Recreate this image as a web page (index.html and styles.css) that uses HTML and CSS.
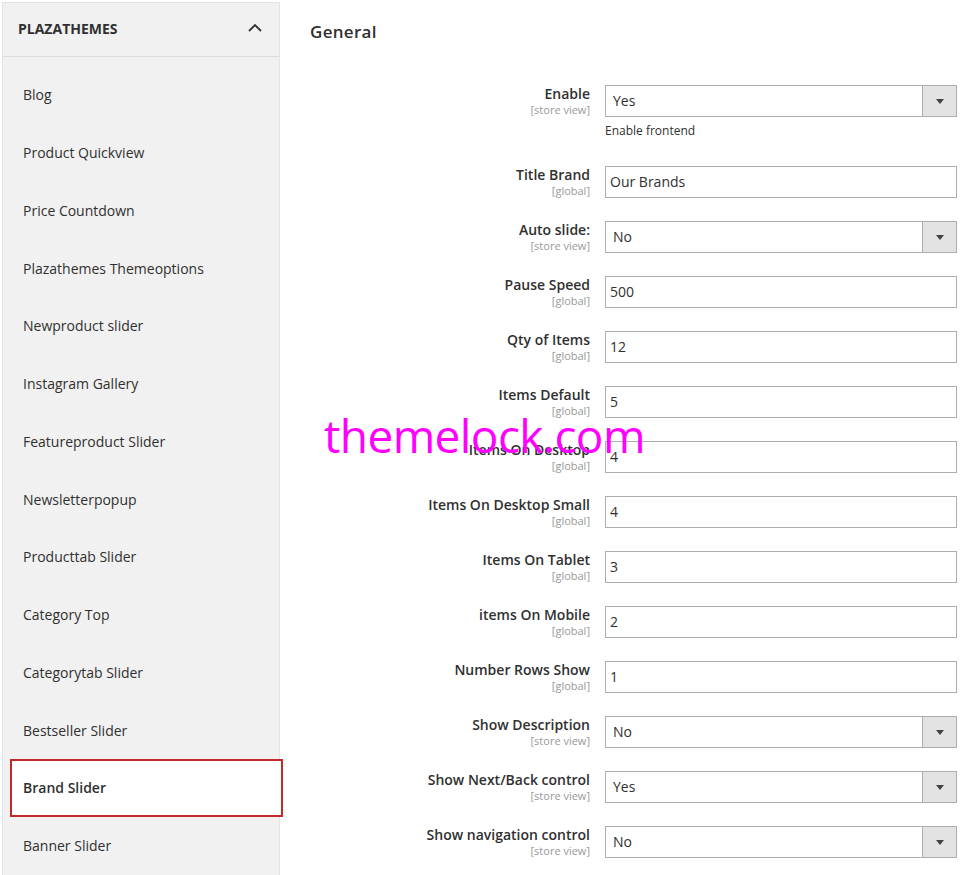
FILE: index.html
```html
<!DOCTYPE html>
<html>
<head>
<meta charset="utf-8">
<link rel="stylesheet" href="styles.css">
</head>
<body>
<div class="page">
  <aside class="sidebar">
    <div class="side-head">
      <span>PLAZATHEMES</span>
      <svg class="chev" width="14" height="9" viewBox="0 0 14 9"><path d="M1 8 L7 2 L13 8" fill="none" stroke="#333" stroke-width="1.8"/></svg>
    </div>
    <ul class="side-list">
      <li>Blog</li>
      <li>Product Quickview</li>
      <li>Price Countdown</li>
      <li>Plazathemes Themeoptions</li>
      <li>Newproduct slider</li>
      <li>Instagram Gallery</li>
      <li>Featureproduct Slider</li>
      <li>Newsletterpopup</li>
      <li>Producttab Slider</li>
      <li>Category Top</li>
      <li>Categorytab Slider</li>
      <li>Bestseller Slider</li>
      <li class="active">Brand Slider</li>
      <li>Banner Slider</li>
    </ul>
  </aside>
  <main class="main">
    <h2 class="title">General</h2>
    <div class="form">
      <div class="row">
        <div class="label"><span class="name">Enable</span><span class="scope">[store view]</span></div>
        <div class="control">
          <div class="select"><span class="val">Yes</span><span class="arrow"></span></div>
          <div class="note">Enable frontend</div>
        </div>
      </div>
      <div class="row">
        <div class="label"><span class="name">Title Brand</span><span class="scope">[global]</span></div>
        <div class="control"><div class="input">Our Brands</div></div>
      </div>
      <div class="row">
        <div class="label"><span class="name">Auto slide:</span><span class="scope">[store view]</span></div>
        <div class="control"><div class="select"><span class="val">No</span><span class="arrow"></span></div></div>
      </div>
      <div class="row">
        <div class="label"><span class="name">Pause Speed</span><span class="scope">[global]</span></div>
        <div class="control"><div class="input">500</div></div>
      </div>
      <div class="row">
        <div class="label"><span class="name">Qty of Items</span><span class="scope">[global]</span></div>
        <div class="control"><div class="input">12</div></div>
      </div>
      <div class="row">
        <div class="label"><span class="name">Items Default</span><span class="scope">[global]</span></div>
        <div class="control"><div class="input">5</div></div>
      </div>
      <div class="row">
        <div class="label"><span class="name">Items On Desktop</span><span class="scope">[global]</span></div>
        <div class="control"><div class="input">4</div></div>
      </div>
      <div class="row">
        <div class="label"><span class="name">Items On Desktop Small</span><span class="scope">[global]</span></div>
        <div class="control"><div class="input">4</div></div>
      </div>
      <div class="row">
        <div class="label"><span class="name">Items On Tablet</span><span class="scope">[global]</span></div>
        <div class="control"><div class="input">3</div></div>
      </div>
      <div class="row">
        <div class="label"><span class="name">items On Mobile</span><span class="scope">[global]</span></div>
        <div class="control"><div class="input">2</div></div>
      </div>
      <div class="row">
        <div class="label"><span class="name">Number Rows Show</span><span class="scope">[global]</span></div>
        <div class="control"><div class="input">1</div></div>
      </div>
      <div class="row">
        <div class="label"><span class="name">Show Description</span><span class="scope">[store view]</span></div>
        <div class="control"><div class="select"><span class="val">No</span><span class="arrow"></span></div></div>
      </div>
      <div class="row">
        <div class="label"><span class="name">Show Next/Back control</span><span class="scope">[store view]</span></div>
        <div class="control"><div class="select"><span class="val">Yes</span><span class="arrow"></span></div></div>
      </div>
      <div class="row">
        <div class="label"><span class="name">Show navigation control</span><span class="scope">[store view]</span></div>
        <div class="control"><div class="select"><span class="val">No</span><span class="arrow"></span></div></div>
      </div>
    </div>
  </main>
  <div class="watermark">themelock.com</div>
</div>
</body>
</html>
```

FILE: styles.css
```css
* { box-sizing: border-box; }
html, body { margin: 0; padding: 0; background: #fff; }
body {
  font-family: "Open Sans", "Liberation Sans", sans-serif;
  color: #303030;
  font-size: 14px;
}
.page {
  position: relative;
  display: flex;
  align-items: flex-start;
  width: 974px;
  height: 875px;
  overflow: hidden;
}
.sidebar {
  width: 278px;
  margin: 2px 0 0 2px;
  height: 873px;
  background: #f1f1f1;
  border: 1px solid #e3e3e3;
  border-bottom: 0;
  flex: none;
}
.side-head {
  height: 54px;
  display: flex;
  align-items: center;
  justify-content: space-between;
  padding: 0 17px 0 15px;
  border-bottom: 1px solid #dcdcdc;
  font-weight: 700;
  font-size: 14px;
  color: #303030;
}
.side-head span { margin-top: -3px; }
.chev { margin-top: -4px; }
.side-list {
  list-style: none;
  margin: 0;
  padding: 9px 0 0 0;
}
.side-list li {
  height: 57.75px;
  display: flex;
  align-items: center;
  padding-left: 20px;
  font-size: 14px;
  color: #303030;
}
.side-list li.active {
  background: #fff;
  border: 2px solid #c4282b;
  margin-left: 7px;
  margin-right: -4px;
  padding-left: 11px;
  font-weight: 600;
}
.main {
  flex: 1;
  padding: 0 17px 0 30px;
}
.title {
  margin: 20px 0 0 0;
  font-size: 17px;
  font-weight: 600;
  line-height: 23px;
  color: #303030;
  letter-spacing: 0.3px;
}
.form {
  margin-top: 42px;
  display: flex;
  flex-direction: column;
  gap: 23px;
}
.row {
  display: grid;
  grid-template-columns: 1fr 352px;
  column-gap: 15px;
}
.label {
  display: flex;
  flex-direction: column;
  align-items: flex-end;
  text-align: right;
}
.name {
  font-weight: 600;
  font-size: 14px;
  line-height: 18px;
  color: #303030;
}
.scope {
  font-size: 11px;
  line-height: 13px;
  color: #999;
}
.input, .select {
  height: 32px;
  border: 1px solid #adadad;
  background: #fff;
  display: flex;
  align-items: center;
  padding-left: 7px;
  padding-bottom: 1px;
  font-size: 14px;
  color: #303030;
}
.input { padding-left: 4px; }
.select .val { flex: 1; }
.arrow {
  width: 34px;
  align-self: stretch;
  margin-bottom: -1px;
  background: #e3e3e3;
  border-left: 1px solid #adadad;
  position: relative;
}
.arrow::after {
  content: "";
  position: absolute;
  left: 13px;
  top: 13px;
  border-left: 4px solid transparent;
  border-right: 4px solid transparent;
  border-top: 5px solid #414141;
}
.note {
  margin-top: 4px;
  margin-bottom: 2px;
  font-size: 12px;
  line-height: 20px;
  color: #303030;
}
.watermark {
  position: absolute;
  left: 324px;
  top: 403px;
  font-size: 46px;
  line-height: 64px;
  color: #ff00ff;
  letter-spacing: -0.6px;
}
```
